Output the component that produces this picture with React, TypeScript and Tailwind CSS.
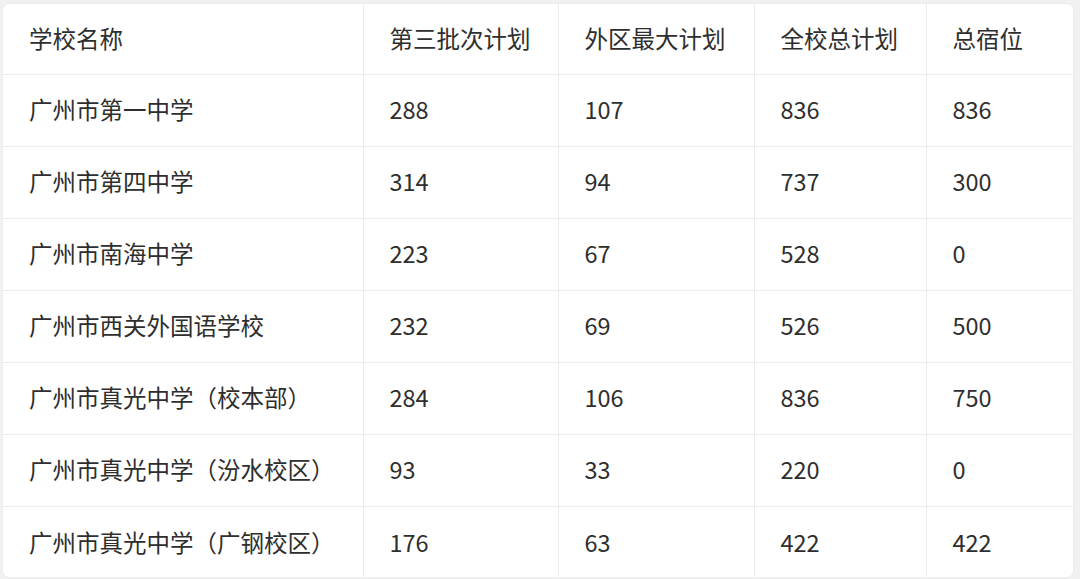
import React from "react";

const headers = ["学校名称", "第三批次计划", "外区最大计划", "全校总计划", "总宿位"];

const rows: (string | number)[][] = [
  ["广州市第一中学", 288, 107, 836, 836],
  ["广州市第四中学", 314, 94, 737, 300],
  ["广州市南海中学", 223, 67, 528, 0],
  ["广州市西关外国语学校", 232, 69, 526, 500],
  ["广州市真光中学（校本部）", 284, 106, 836, 750],
  ["广州市真光中学（汾水校区）", 93, 33, 220, 0],
  ["广州市真光中学（广钢校区）", 176, 63, 422, 422],
];

const colWidths = ["w-[360px]", "w-[195px]", "w-[196px]", "w-[172px]", "w-[147px]"];

export default function App() {
  return (
    <div
      className="h-[579px] w-[1080px] bg-[#f1f1f1] pl-[3px] pt-[4px]"
      style={{ fontFamily: '"Noto Sans CJK SC", "Noto Sans", sans-serif' }}
    >
      <div className="h-[573px] w-[1070px] overflow-hidden rounded-[6px] bg-white shadow-[0_0_2px_rgba(0,0,0,0.08)]">
        <table className="w-full table-fixed border-collapse text-[23.5px] text-[#2e2e2e]">
          <colgroup>
            {colWidths.map((w, i) => (
              <col key={i} className={w} />
            ))}
          </colgroup>
          <thead>
            <tr className="h-[70px]">
              {headers.map((h, i) => (
                <th
                  key={h}
                  className={`px-[26px] text-left font-normal ${i > 0 ? "border-l border-[#ececec]" : ""}`}
                >
                  {h}
                </th>
              ))}
            </tr>
          </thead>
          <tbody>
            {rows.map((r) => (
              <tr key={r[0]} className="h-[72px] border-t border-[#ececec]">
                {r.map((c, i) => (
                  <td
                    key={i}
                    className={`whitespace-nowrap px-[26px] ${i > 0 ? "border-l border-[#ececec]" : ""}`}
                  >
                    {c}
                  </td>
                ))}
              </tr>
            ))}
          </tbody>
        </table>
      </div>
    </div>
  );
}
